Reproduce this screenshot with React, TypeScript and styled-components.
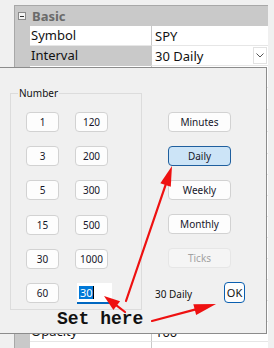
import {Fragment} from "react";
import styled, {createGlobalStyle} from "styled-components";

const GlobalStyle = createGlobalStyle`
  html, body {
    margin: 0;
    padding: 0;
    background: #f0f0f0;
  }
  body {
    font-family: "Noto Sans", "Open Sans", sans-serif;
    color: #111;
  }
`;

const Frame = styled.div`
  position: relative;
  width: 274px;
  height: 348px;
  overflow: hidden;
  background: #f0f0f0;
`;

// ---- property grid ----

const Grid = styled.div`
  margin: 5px 0 0 14px;
  width: 253px;
  border-top: 1px solid #a8a8a8;
  border-left: 1px solid #a8a8a8;
  font-size: 13px;
`;

const Category = styled.div`
  height: 20px;
  display: flex;
  align-items: center;
  gap: 6px;
  padding-left: 3px;
  background: #c9c9c9;
  color: #6a6a6a;
  font-weight: bold;
`;

const Toggle = styled.span`
  width: 8px;
  height: 8px;
  border: 1px solid #8a8a8a;
  background: #f4f4f4;
  display: flex;
  align-items: center;
  justify-content: center;
  box-sizing: border-box;
  &::after {
    content: "";
    width: 4px;
    height: 1px;
    background: #333;
  }
`;

const Row = styled.div<{ $h?: number }>`
  display: grid;
  grid-template-columns: 15px 121px 1fr;
  height: ${p => p.$h ?? 20}px;
  background: #c9c9c9;
`;

const Label = styled.div<{ $selected?: boolean }>`
  background: ${p => (p.$selected ? "#c9c9c9" : "#fff")};
  border-bottom: 1px solid ${p => (p.$selected ? "#c9c9c9" : "#e6e6e6")};
  padding-left: 1px;
  line-height: 19px;
  white-space: nowrap;
  overflow: hidden;
`;

const Value = styled.div`
  display: flex;
  align-items: center;
  justify-content: space-between;
  background: #fff;
  border-left: 1px solid #c9c9c9;
  border-bottom: 1px solid #e6e6e6;
  padding-left: 3px;
  white-space: nowrap;
`;

const DropButton = styled.span`
  width: 14px;
  height: 17px;
  margin-right: 1px;
  border: 1px solid #e2e2e2;
  background: #fff;
  display: flex;
  align-items: center;
  justify-content: center;
  box-sizing: border-box;
`;

// ---- dialog ----

const Dialog = styled.div`
  position: absolute;
  left: -1px;
  top: 67px;
  width: 268px;
  height: 267px;
  box-sizing: border-box;
  border: 1px solid #8c8c8c;
  background: #f0f0f0;
  display: flex;
  align-items: flex-start;
  padding: 25px 0 0 10px;
  font-size: 10px;
`;

const Group = styled.div`
  position: relative;
  width: 132px;
  height: 217px;
  box-sizing: border-box;
  border: 1px solid #dcdcdc;
  display: grid;
  grid-template-columns: 33px 33px;
  grid-auto-rows: 20px;
  column-gap: 16px;
  row-gap: 14.2px;
  padding: 18px 0 0 15px;
`;

const Legend = styled.span`
  position: absolute;
  left: 7px;
  top: -8px;
  padding: 0 1px;
  background: #f0f0f0;
  line-height: 14px;
`;

const Button = styled.div<{ $active?: boolean; $disabled?: boolean }>`
  height: 20px;
  box-sizing: border-box;
  display: flex;
  align-items: center;
  justify-content: center;
  border-radius: 4px;
  border: 1px solid ${p => (p.$active ? "#1f5f9e" : p.$disabled ? "#e6e6e6" : "#d2d2d2")};
  background: ${p => (p.$active ? "#cce4f7" : p.$disabled ? "#f5f5f5" : "#fdfdfd")};
  color: ${p => (p.$disabled ? "#a2a2a2" : "#16162a")};
`;

const NumberInput = styled.div`
  width: 35px;
  height: 21px;
  margin-left: 2px;
  box-sizing: border-box;
  background: #fff;
  border-bottom: 2px solid #0067c0;
  display: flex;
  align-items: center;
  padding-left: 2px;
  font-size: 11px;
`;

const Selection = styled.span`
  background: #0078d7;
  color: #fff;
  line-height: 13px;
  padding: 0 0 0 1px;
`;

const Caret = styled.span`
  width: 1.5px;
  height: 13px;
  background: #000;
`;

const Side = styled.div`
  margin-left: 13px;
  display: flex;
  flex-direction: column;
  gap: 14px;
  padding-top: 19px;
  width: 90px;
`;

const SideButton = styled(Button)`
  width: 63px;
  margin-left: 13px;
`;

const Footer = styled.div`
  margin-top: 3px;
  display: flex;
  align-items: center;
  justify-content: space-between;
`;

const OkButton = styled.div`
  width: 21px;
  height: 21px;
  box-sizing: border-box;
  border: 1px solid #0a5fb0;
  border-radius: 4px;
  background: #fdfdfd;
  display: flex;
  align-items: center;
  justify-content: center;
  font-size: 11px;
  margin-top: -3px;
`;

// ---- annotation ----

const Overlay = styled.svg`
  position: absolute;
  left: 0;
  top: 0;
  pointer-events: none;
`;

const Note = styled.div`
  position: absolute;
  left: 57px;
  top: 309px;
  font-family: "Liberation Mono", "DejaVu Sans Mono", monospace;
  font-weight: bold;
  font-size: 18px;
  line-height: 20px;
  color: #111;
`;

interface IArrow {
    from: [number, number];
    to: [number, number];
    head: number;
}

function Arrow({from, to, head}: IArrow) {
    const dx = to[0] - from[0];
    const dy = to[1] - from[1];
    const len = Math.hypot(dx, dy);
    const ux = dx / len;
    const uy = dy / len;
    const bx = to[0] - ux * head;
    const by = to[1] - uy * head;
    const w = 5.5;
    const pts = `${to[0]},${to[1]} ${bx - uy * w},${by + ux * w} ${bx + uy * w},${by - ux * w}`;
    return (
        <g>
            <line x1={from[0]} y1={from[1]} x2={bx + ux * 2} y2={by + uy * 2} stroke="#ee1111" strokeWidth={2.2} strokeLinecap="round"/>
            <polygon points={pts} fill="#ee1111"/>
        </g>
    );
}

const leftNumbers = ["1", "3", "5", "15", "30", "60"];
const rightNumbers = ["120", "200", "300", "500", "1000"];
// rows hidden behind the dialog
const hiddenRows = [22, 22, 22, 22, 21, 21, 21, 21, 21, 21, 21, 21];

function App() {
    return (
        <Frame>
            <GlobalStyle/>
            <Grid>
                <Category><Toggle/>Basic</Category>
                <Row>
                    <span/>
                    <Label>Symbol</Label>
                    <Value>SPY</Value>
                </Row>
                <Row>
                    <span/>
                    <Label $selected>Interval</Label>
                    <Value>
                        30 Daily
                        <DropButton>
                            <svg width="8" height="5" viewBox="0 0 8 5">
                                <path d="M0.5 0.5 L4 4 L7.5 0.5" fill="none" stroke="#555" strokeWidth="1"/>
                            </svg>
                        </DropButton>
                    </Value>
                </Row>
                {hiddenRows.map((h, i) => (
                    <Row key={i} $h={h}>
                        <span/>
                        <Label/>
                        <Value/>
                    </Row>
                ))}
                <Row>
                    <span/>
                    <Label>Opacity</Label>
                    <Value>100</Value>
                </Row>
                <Row>
                    <span/>
                    <Label/>
                    <Value/>
                </Row>
            </Grid>

            <Dialog>
                <Group>
                    <Legend>Number</Legend>
                    {leftNumbers.map((n, i) => (
                        <Fragment key={n}>
                            <Button>{n}</Button>
                            {i < rightNumbers.length ? (
                                <Button>{rightNumbers[i]}</Button>
                            ) : (
                                <NumberInput><Selection>30</Selection><Caret/></NumberInput>
                            )}
                        </Fragment>
                    ))}
                </Group>
                <Side>
                    <SideButton>Minutes</SideButton>
                    <SideButton $active>Daily</SideButton>
                    <SideButton>Weekly</SideButton>
                    <SideButton>Monthly</SideButton>
                    <SideButton $disabled>Ticks</SideButton>
                    <Footer>
                        <span>30 Daily</span>
                        <OkButton>OK</OkButton>
                    </Footer>
                </Side>
            </Dialog>

            <Note>Set here</Note>
            <Overlay width="274" height="348" viewBox="0 0 274 348">
                <Arrow from={[126, 301]} to={[172, 166]} head={20}/>
                <Arrow from={[125, 312]} to={[104, 296]} head={16}/>
                <Arrow from={[152, 321]} to={[216, 304]} head={22}/>
            </Overlay>
        </Frame>
    );
}

export default App;
